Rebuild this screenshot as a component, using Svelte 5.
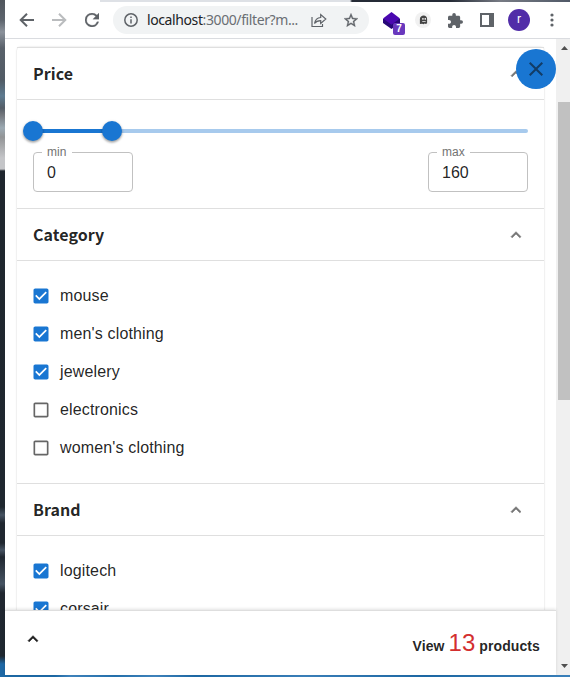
<script>
  const categories = [
    { name: 'mouse', on: true },
    { name: "men's clothing", on: true },
    { name: 'jewelery', on: true },
    { name: 'electronics', on: false },
    { name: "women's clothing", on: false },
  ];
  const brands = [
    { name: 'logitech', on: true },
    { name: 'corsair', on: true },
  ];
  const low = 0;
  const high = 16;
</script>

{#snippet chevron()}
  <svg class="chevron" viewBox="0 0 24 24" width="20" height="20"><path d="M7.41 15.41 12 10.83l4.59 4.58L18 14l-6-6-6 6z" /></svg>
{/snippet}

{#snippet option(item)}
  <div class="option">
    <svg viewBox="0 0 24 24" width="20" height="20" class:on={item.on}>
      {#if item.on}
        <path d="M19 3H5c-1.11 0-2 .9-2 2v14c0 1.1.89 2 2 2h14c1.11 0 2-.9 2-2V5c0-1.1-.89-2-2-2zm-9 14l-5-5 1.41-1.41L10 14.17l7.59-7.59L19 8l-9 9z" />
      {:else}
        <path d="M19 5v14H5V5h14m0-2H5c-1.1 0-2 .9-2 2v14c0 1.1.9 2 2 2h14c1.1 0 2-.9 2-2V5c0-1.1-.9-2-2-2z" />
      {/if}
    </svg>
    <span>{item.name}</span>
  </div>
{/snippet}

<div class="desktop">
  <div class="tabs"><i></i></div>
  <div class="window">
    <div class="toolbar">
      <svg class="nav back" viewBox="0 0 16 16" width="16" height="16"><path d="M15 8H2M8 1.7 1.7 8 8 14.3" /></svg>
      <svg class="nav forward" viewBox="0 0 16 16" width="16" height="16"><path d="M1 8h13M8 1.7 14.3 8 8 14.3" /></svg>
      <svg class="reload" viewBox="4 4 16 16" width="14" height="14"><path d="M17.65 6.35A7.95 7.95 0 0 0 12 4a8 8 0 1 0 7.73 10h-2.08A6 6 0 1 1 12 6c1.66 0 3.14.69 4.22 1.78L13 11h7V4z" /></svg>
      <div class="address">
        <svg class="info" viewBox="0 0 14 14" width="14" height="14"><circle cx="7" cy="7" r="6.2" /><path d="M7 6.2v4.3M7 3.4v1.6" /></svg>
        <span class="url"><b>localhost</b>:3000/filter?m...</span>
        <svg class="share" viewBox="0 0 16 15" width="16" height="15"><path d="M1 4v9.5h10.5V11M3.5 10.5C4.2 7 6.2 4.8 9.7 4.5V1.6L14.8 6 9.7 10.4V7.6C7 7.6 5 8.3 3.5 10.5z" /></svg>
        <svg class="star" viewBox="2 2 20 19" width="14" height="14"><path d="m22 9.24-7.19-.62L12 2 9.19 8.63 2 9.24l5.46 4.73L5.82 21 12 17.27 18.18 21l-1.63-7.03L22 9.24zM12 15.4l-3.76 2.27 1-4.28-3.32-2.88 4.38-.38L12 6.1l1.71 4.04 4.38.38-3.32 2.88 1 4.28L12 15.4z" /></svg>
      </div>
      <div class="layers">
        <svg viewBox="0 0 17 17" width="17" height="17"><path fill="#270878" d="M0 7v4l8.5 6L17 11V7z" /><path fill="#4a08b0" d="M8.5 0 17 6.4 8.5 12.8 0 6.4z" /></svg>
        <em>7</em>
      </div>
      <div class="ghost">
        <svg viewBox="0 0 10 11" width="9" height="10"><path fill="#454545" d="M1 10V4.5C1 2 3 .5 5.2.5S9 2 9 4.5V9l-1.3 1-1.4-.5L5 10.3l-1.4-.5z" /><path fill="#eee" d="M3.6 3.2h1.5v2H3.6zM6.2 3.2h1.5v2H6.2zM3.6 6.8h3.8v1H3.6z" /></svg>
      </div>
      <svg class="puzzle" viewBox="2 1 21 21" width="15" height="15"><path d="M20.5 11H19V7c0-1.1-.9-2-2-2h-4V3.5a2.5 2.5 0 0 0-5 0V5H4c-1.1 0-1.99.9-1.99 2v3.8H3.5c1.49 0 2.7 1.21 2.7 2.7s-1.21 2.7-2.7 2.7H2V20c0 1.1.9 2 2 2h3.8v-1.5c0-1.49 1.21-2.7 2.7-2.7s2.7 1.21 2.7 2.7V22H17c1.1 0 2-.9 2-2v-4h1.5a2.5 2.5 0 0 0 0-5z" /></svg>
      <i class="panel"></i>
      <span class="avatar">r</span>
      <svg class="dots" viewBox="0 0 4 14" width="4" height="14"><circle cx="2" cy="2" r="1.6" /><circle cx="2" cy="7" r="1.6" /><circle cx="2" cy="12" r="1.6" /></svg>
    </div>

    <div class="body">
      <div class="page">
        <div class="filters">
          <div class="paper">
            <section>
              <header><h2>Price</h2>{@render chevron()}</header>
              <div class="price">
                <div class="slider">
                  <div class="filled" style="width: {high - low}%"></div>
                  <b class="thumb" style="left: {low}%"></b>
                  <b class="thumb" style="left: {high}%"></b>
                </div>
                <div class="fields">
                  <fieldset><legend>min</legend><span>0</span></fieldset>
                  <fieldset><legend>max</legend><span>160</span></fieldset>
                </div>
              </div>
            </section>
            <section>
              <header><h2>Category</h2>{@render chevron()}</header>
              <div class="options">{#each categories as item}{@render option(item)}{/each}</div>
            </section>
            <section>
              <header><h2>Brand</h2>{@render chevron()}</header>
              <div class="options">{#each brands as item}{@render option(item)}{/each}</div>
            </section>
          </div>
        </div>
        <footer>
          <svg viewBox="0 0 24 24" width="20" height="20"><path d="M7.41 15.41 12 10.83l4.59 4.58L18 14l-6-6-6 6z" /></svg>
          <p>View <strong>13</strong> products</p>
        </footer>
        <div class="close"><svg viewBox="0 0 24 24" width="24" height="24"><path d="M19 6.41 17.59 5 12 10.59 6.41 5 5 6.41 10.59 12 5 17.59 6.41 19 12 13.41 17.59 19 19 17.59 13.41 12z" /></svg></div>
      </div>
      <div class="scrollbar">
        <svg viewBox="0 0 7 4" width="7" height="4"><path d="M0 4 3.5 0 7 4z" /></svg>
        <div class="track"><i></i></div>
        <svg viewBox="0 0 7 4" width="7" height="4"><path d="M0 0h7L3.5 4z" /></svg>
      </div>
    </div>
  </div>
</div>

<style>
  * { box-sizing: border-box; }
  .desktop {
    width: 570px;
    height: 677px;
    padding: 0 0 2px 5px;
    overflow: hidden;
    display: flex;
    flex-direction: column;
    font-family: "Liberation Sans", Arial, sans-serif;
    color: rgba(0, 0, 0, 0.87);
    background:
      linear-gradient(90deg, #1d69a5, #1d69a5 50px, #4084bd 65px, #2471ad 110px, #4084bd 150px, #1d69a5 190px, #3b80ba 300px, #1d69a5 420px, #3b80ba 570px) 5px 675px / 565px 2px no-repeat,
      linear-gradient(#50565d 0, #5d646d 20px, #8b929b 32px, #59616a 48px, #515b65 80px, #5e7b90 96px, #555e67 108px, #73777d 115px, #9caab3 128px, #929496 137px, #c4c5c8 158px, #c4c5c8 169px, #1f262e 171px, #1f272f 507px, #465362 515px, #202730 523px, #202730 543px, #465362 550px, #202730 557px, #465362 584px, #202730 593px, #1f2830 656px, #1e68a5 664px, #1e68a5 677px);
  }
  .tabs { height: 2px; flex: none; display: flex; background: #fff; }
  .tabs i { margin-left: 95px; width: 470px; background: linear-gradient(90deg, #dee1e6 0 250px, #252b36 252px 350px, #777b84 400px, #505967); }
  .window { flex: 1; min-height: 0; display: flex; flex-direction: column; background: #fff; }
  .toolbar { height: 37px; flex: none; display: flex; align-items: center; border-bottom: 1px solid #dadce0; padding-left: 14px; }
  .toolbar > * { flex: none; }
  .nav { fill: none; stroke: #5f6368; stroke-width: 2; }
  .forward { stroke: #babcbe; margin-left: 16px; }
  .reload { fill: #5f6368; stroke: #5f6368; stroke-width: 0.3; margin-left: 18px; }
  .address { width: 256px; height: 28px; margin-left: 14px; padding-left: 11px; border-radius: 14px; background: #f1f3f4; display: flex; align-items: center; }
  .info { fill: none; stroke: #5f6368; stroke-width: 1.5; }
  .url { width: 152px; margin-left: 9px; font: 14px/20px "Noto Sans", sans-serif; letter-spacing: -0.4px; color: #6a6e73; white-space: nowrap; }
  .url b { font-weight: 400; color: #202124; }
  .share { fill: none; stroke: #5f6368; stroke-width: 1.2; margin-left: 12px; }
  .star { fill: #5f6368; stroke: #5f6368; stroke-width: 0.5; margin-left: 17px; }
  .layers { position: relative; width: 17px; height: 17px; margin-left: 14px; display: flex; }
  .layers em { position: absolute; left: 10px; top: 11px; width: 12px; height: 12px; border-radius: 2px; background: #6938bd; color: #fff; font: 700 10px/12px "Liberation Sans", sans-serif; text-align: center; }
  .ghost { width: 16px; height: 16px; margin-left: 15px; border-radius: 50%; background: #f1f1f1; display: grid; place-items: center; }
  .puzzle { fill: #5f6368; margin-left: 17px; }
  .panel { width: 14px; height: 14px; margin-left: 17px; border: 2px solid #5f6368; border-right-width: 5px; }
  .avatar { width: 22px; height: 22px; margin-left: 14px; border-radius: 50%; background: #512da8; color: #fff; font: 12px/21px Roboto, sans-serif; text-align: center; }
  .dots { fill: #5f6368; margin-left: 20px; }

  .body { flex: 1; min-height: 0; display: flex; }
  .page { position: relative; width: 551px; display: flex; flex-direction: column; }
  .filters { flex: 1; min-height: 0; overflow: hidden; padding: 8px 12px 0; }
  .paper { height: 900px; border-radius: 4px 4px 0 0; box-shadow: 0 2px 1px -1px rgba(0,0,0,.12), 0 1px 1px rgba(0,0,0,.09), 0 0 2px rgba(0,0,0,.18); }
  section { border-top: 1px solid #dfdfdf; }
  header { height: 52px; padding: 0 18px 0 16px; border-bottom: 1px solid #dfdfdf; display: flex; align-items: center; justify-content: space-between; }
  h2 { margin: 0; padding-bottom: 2px; font: 700 16px/24px "Noto Sans CJK SC", "Noto Sans", sans-serif; letter-spacing: 0.05px; }
  .chevron { fill: #757575; stroke: #757575; stroke-width: 0.7; }
  .price { height: 108px; padding: 29px 16px 0; }
  .slider { position: relative; height: 4px; border-radius: 2px; background: #a7caed; }
  .filled { height: 4px; background: #1976d2; }
  .thumb { position: absolute; top: -8px; width: 20px; height: 20px; margin-left: -10px; border-radius: 50%; background: #1976d2; box-shadow: 0 1px 3px rgba(0,0,0,.3), 0 2px 2px rgba(0,0,0,.15); }
  .fields { display: flex; justify-content: space-between; margin-top: 13px; }
  fieldset { width: 100px; height: 46px; margin: 0; padding: 0 13px; border: 1px solid #c1c1c1; border-radius: 4px; min-width: 0; }
  legend { margin-left: -5px; padding: 0 5px; font-size: 12px; line-height: 13px; letter-spacing: 0.1px; color: #737373; }
  fieldset span { display: block; font-size: 16px; line-height: 18px; margin-top: 5px; }
  .options { height: 222px; padding: 16px 14px 0; }
  .option { height: 38px; display: flex; align-items: center; gap: 9px; font-size: 16px; letter-spacing: 0.15px; }
  .option svg { fill: #666; flex: none; }
  .option svg.on { fill: #1976d2; }
  footer { height: 65px; flex: none; border-top: 1px solid #dedede; box-shadow: 0 -1px 3px rgba(0,0,0,.12); background: #fff; padding: 0 16px 0 18px; display: flex; justify-content: space-between; align-items: flex-start; z-index: 1; }
  footer svg { margin-top: 18px; fill: #1d1d1d; stroke: #1d1d1d; stroke-width: 0.7; }
  footer p { margin: 18px 0 0; font-weight: 700; font-size: 14px; line-height: 28px; letter-spacing: 0.1px; white-space: nowrap; }
  footer strong { font-weight: 400; font-size: 24px; letter-spacing: 0; color: #d32f2f; }
  .close { position: absolute; right: 0; top: 10px; width: 40px; height: 40px; border-radius: 50%; background: #1976d2; display: grid; place-items: center; z-index: 2; }
  .close svg { fill: #123c66; }
  .scrollbar { width: 14px; background: #f0f0f0; padding: 7px 0 7px 2px; display: flex; flex-direction: column; align-items: flex-start; }
  .scrollbar svg { flex: none; fill: #505050; margin-left: 3px; }
  .track { flex: 1; width: 12px; padding-top: 52px; }
  .track i { display: block; height: 298px; background: #c1c1c1; }
</style>
